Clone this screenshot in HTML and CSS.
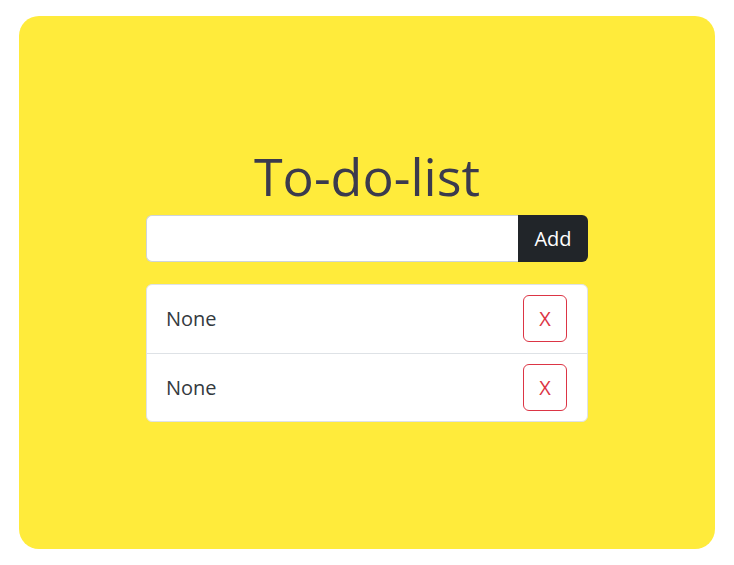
FILE: index.html
```html
<!DOCTYPE html>
<html>
<head>
<meta charset="utf-8">
<link rel="stylesheet" href="styles.css">
</head>
<body>
<div class="page">
  <div class="board">
    <div class="content">
      <h1 class="title">To-do-list</h1>
      <div class="input-group">
        <input class="field" type="text">
        <button class="add">Add</button>
      </div>
      <ul class="list">
        <li class="item"><span>None</span><button class="del">X</button></li>
        <li class="item"><span>None</span><button class="del">X</button></li>
      </ul>
    </div>
  </div>
</div>
</body>
</html>
```
FILE: styles.css
```css
html, body { margin: 0; padding: 0; background: #fff; }
body { font-family: "Open Sans", "Liberation Sans", sans-serif; color: #212529; }
.page { padding: 16px 19px; height: 565px; box-sizing: border-box; }
.board {
  background: #ffeb3b;
  border-radius: 20px;
  height: 100%;
  display: flex;
  align-items: center;
  justify-content: center;
}
.content { width: 442px; display: flex; flex-direction: column; margin-top: 2px; }
.title {
  margin: 0 0 7px;
  text-align: center;
  font-weight: 400;
  font-size: 52px;
  line-height: 1.2;
  color: #3b3a4d;
}
.input-group { display: flex; height: 47px; }
.field {
  flex: 1;
  border: 1px solid #ced4da;
  border-right: none;
  border-radius: 6px 0 0 6px;
  background: #fff;
  margin: 0;
  outline: none;
}
.add {
  width: 70px;
  border: none;
  background: #212529;
  color: #fff;
  font-family: inherit;
  font-size: 20px;
  border-radius: 0 6px 6px 0;
  margin: 0;
  padding: 0;
}
.list {
  list-style: none;
  margin: 22px 0 0;
  padding: 0;
  background: #fff;
  border: 1px solid #dee2e6;
  border-radius: 6px;
}
.item {
  display: flex;
  align-items: center;
  justify-content: space-between;
  height: 68px;
  box-sizing: border-box;
  padding: 0 20px 0 19px;
  font-size: 20px;
  color: #343a40;
}
.item + .item { border-top: 1px solid #dee2e6; }
.del {
  width: 44px;
  height: 47px;
  border: 1px solid #dc3545;
  border-radius: 6px;
  background: #fff;
  color: #dc3545;
  font-family: inherit;
  font-size: 20px;
  padding: 0;
}
```
